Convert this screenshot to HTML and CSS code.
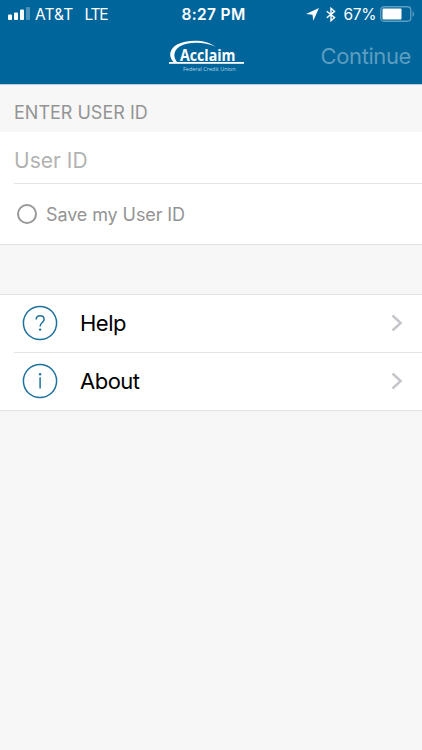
FILE: index.html
```html
<!DOCTYPE html>
<html lang="en">
<head>
  <meta charset="UTF-8" />
  <meta name="viewport" content="width=device-width, initial-scale=1" />
  <title>Acclaim Federal Credit Union</title>
  <link rel="stylesheet" href="styles.css">
</head>
<body>
  <header class="top">
    <div class="status">
      <div class="carrier">
        <svg class="signal" width="22" height="14" viewBox="0 0 22 14" fill="#fff">
          <rect x="0" y="7.5" width="4" height="5.5" rx="1"/>
          <rect x="6" y="5.5" width="4" height="7.5" rx="1"/>
          <rect x="12" y="2.5" width="4" height="10.5" rx="1"/>
          <rect x="18" y="0" width="4" height="13" rx="1" opacity=".3"/>
        </svg>
        <span class="name">AT&amp;T</span>
        <span class="network">LTE</span>
      </div>
      <div class="time">8:27 PM</div>
      <div class="indicators">
        <svg class="location" width="13" height="13" viewBox="0 0 13 13" fill="#fff"><path d="M13 0 7.3 12.8 6.5 6.7 0 6z"/></svg>
        <svg class="bluetooth" width="10" height="15" viewBox="0 0 10 15" fill="none" stroke="#fff" stroke-width="1.4"><path d="M.8 4.2 8.6 10.6 5 13.7V1.3L8.6 4.4.8 10.8"/></svg>
        <span class="percent">67%</span>
        <svg class="battery" width="35" height="16" viewBox="0 0 35 16">
          <rect x=".75" y=".75" width="30" height="14.5" rx="3.2" fill="none" stroke="#5f9fc1" stroke-width="1.3"/>
          <rect x="2.5" y="2.6" width="19" height="10.8" rx="1" fill="#fff"/>
          <path d="M32.5 5.2c2 .9 2 4.7 0 5.6z" fill="#5f9fc1"/>
        </svg>
      </div>
    </div>
    <nav class="navbar">
      <svg class="logo" width="76" height="34" viewBox="0 0 76 34">
        <path d="M4.5 23C-1 17 .5 10 8 5.5 18 .2 37-.2 46.5 7.8 36 2.8 21 2.2 11.5 7 4.8 10.8 3.5 17 8 23z" fill="#fff"/>
        <rect x="0" y="23" width="75" height="1.8" fill="#fff"/>
        <text class="logo-name" x="11" y="21.8" textLength="55.5" lengthAdjust="spacingAndGlyphs">Acclaim</text>
        <text class="logo-sub" x="14" y="31.8" textLength="52.5" lengthAdjust="spacingAndGlyphs">Federal Credit Union</text>
      </svg>
      <button class="continue" disabled>Continue</button>
    </nav>
  </header>

  <main>
    <h2 class="section-title">ENTER USER ID</h2>
    <form class="login">
      <input class="user-id" type="text" placeholder="User ID" aria-label="User ID">
      <label class="save">
        <input class="save-check" type="checkbox">
        <span class="save-text">Save my User ID</span>
      </label>
    </form>

    <div class="menu">
      <div class="row">
        <svg class="row-icon" width="36" height="36" viewBox="0 0 36 36" fill="none" stroke="#1f719f" stroke-width="1.5">
          <circle cx="18" cy="18" r="16.6"/>
          <path d="M14.2 14.6C14.2 12.2 15.7 10.8 18.1 10.8s4 1.4 4 3.5c0 3.3-4 3.3-4 7.2"/>
          <circle cx="18.1" cy="24.6" r="1.2" fill="#1f719f" stroke="none"/>
        </svg>
        <span class="row-label">Help</span>
        <svg class="chevron" width="12" height="18" viewBox="0 0 12 18" fill="none" stroke="#c5c5ca" stroke-width="2.4"><path d="M1.5 1.5 9.7 9 1.5 16.5"/></svg>
      </div>
      <div class="row">
        <svg class="row-icon" width="36" height="36" viewBox="0 0 36 36" fill="none" stroke="#1f719f" stroke-width="1.5">
          <circle cx="18" cy="18" r="16.6"/>
          <path d="M18.1 14.3V25.5"/>
          <circle cx="18.1" cy="11.3" r="1.2" fill="#1f719f" stroke="none"/>
        </svg>
        <span class="row-label">About</span>
        <svg class="chevron" width="12" height="18" viewBox="0 0 12 18" fill="none" stroke="#c5c5ca" stroke-width="2.4"><path d="M1.5 1.5 9.7 9 1.5 16.5"/></svg>
      </div>
    </div>
  </main>
</body>
</html>
```

FILE: styles.css
```css
* { box-sizing:border-box; }
body { margin:0; min-height:100vh; background:#f7f7f7; font-family:Inter, "Liberation Sans", sans-serif; color:#000; }

.top { height:85px; background:#00659b; border-bottom:1px solid #b5cfdf; color:#fff; }

/* status bar */
.status { display:grid; grid-template-columns:1fr auto 1fr; align-items:center; height:28px; padding:0 8px; }
.carrier { display:flex; align-items:center; font-size:15.5px; }
.name { margin-left:5px; letter-spacing:0.1px; }
.network { margin-left:11px; letter-spacing:-1.2px; }
.time { margin-left:5px; font-size:15.5px; font-weight:600; letter-spacing:0.35px; }
.indicators { display:flex; align-items:center; justify-content:flex-end; }
.bluetooth { margin-left:7px; }
.percent { margin:0 4px 0 8px; font-size:15.5px; letter-spacing:-0.4px; }
.battery { margin-right:-1px; }

/* nav bar */
.navbar { display:grid; grid-template-columns:1fr auto 1fr; align-items:center; height:56px; padding:0 11px; }
.logo { grid-column:2; margin-left:-8px; overflow:visible; }
.logo-name { font:bold 16px "Open Sans", sans-serif; fill:#fff; }
.logo-sub { font:6px "Open Sans", sans-serif; fill:#b9d7e6; }
.continue { justify-self:end; padding:0; border:none; background:none; font-family:inherit; font-size:22px; letter-spacing:-0.4px; color:#5c9dc0; }

.section-title { display:flex; align-items:center; height:47px; margin:0; padding:7px 14px 0; font-size:18px; font-weight:400; letter-spacing:0; color:#949494; }

.login { height:113px; background:#fff; border-bottom:1px solid #e2e2e2; }
.user-id { display:block; width:calc(100% - 14px); height:52px; margin-left:14px; padding:5px 0 0; border:none; border-bottom:1px solid #e4e4e4; background:none; font-family:inherit; font-size:21px; letter-spacing:0; outline:none; }
.user-id::placeholder { color:#b2b2b2; opacity:1; }
.save { display:flex; align-items:center; height:60px; padding-left:17px; }
.save-check { appearance:none; width:20px; height:20px; margin:0 9px 0 0; border:2px solid #999; border-radius:50%; }
.save-check:checked { background:#999; }
.save-text { font-size:18px; letter-spacing:-0.1px; color:#949494; }

/* menu rows */
.menu { margin-top:49px; background:#fff; border-top:1px solid #e2e2e2; border-bottom:1px solid #e2e2e2; }
.row { position:relative; display:flex; align-items:center; height:58px; padding:0 19px 2px 22px; }
.row + .row { height:57px; padding-bottom:1px; }
.row + .row::before { content:""; position:absolute; top:-1px; left:14px; right:0; height:1px; background:#e4e4e4; }
.row-label { flex:1; margin-left:22px; font-size:22px; letter-spacing:-0.5px; }
```
